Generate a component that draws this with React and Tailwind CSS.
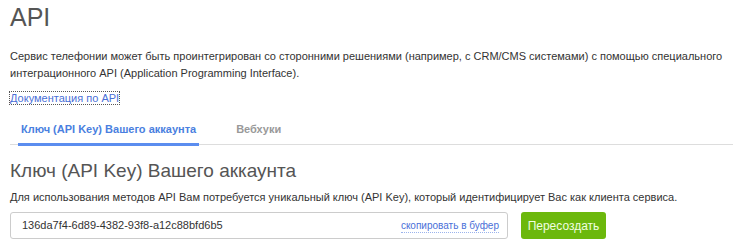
import React from 'react';

export default function App() {
  return (
    <div className="w-[743px] h-[243px] bg-white overflow-hidden px-[10px] font-['Liberation_Sans',Arial,sans-serif] text-[#333]">
      <h1 className="text-[25px] leading-[30px] pt-[2px] text-[#555]">API</h1>
      <p className="text-[11px] leading-[17px] mt-[16px]">
        Сервис телефонии может быть проинтегрирован со сторонними решениями (например, с CRM/CMS системами) с помощью специального интеграционного API (Application Programming Interface).
      </p>
      <div className="mt-[7px] leading-[16px]">
        <a className="text-[11px] leading-[16px] text-[#4a6fd8] outline outline-1 outline-dotted outline-[#555]">
          Документация по API
        </a>
      </div>
      <div className="flex border-b border-[#ddd] mt-[12px]">
        <div className="ml-[8px] px-[3px] pt-[4px] pb-[7px] border-b-[3px] border-[#5b8def] -mb-[2px] text-[11px] leading-[14px] font-bold text-[#4a7fe0]">
          Ключ (API Key) Вашего аккаунта
        </div>
        <div className="ml-[37px] pt-[4px] pb-[7px] text-[11px] leading-[14px] font-bold text-[#999]">
          Вебхуки
        </div>
      </div>
      <h2 className="text-[19px] leading-[24px] mt-[14px] text-[#555]">Ключ (API Key) Вашего аккаунта</h2>
      <p className="text-[11px] leading-[16px] mt-[6px]">
        Для использования методов API Вам потребуется уникальный ключ (API Key), который идентифицирует Вас как клиента сервиса.
      </p>
      <div className="flex items-center gap-[13px] mt-[7px]">
        <div className="w-[498px] h-[27px] border border-[#ccc] rounded-[3px] flex items-center justify-between pl-[11px] pr-[8px]">
          <span className="text-[11px]">136da7f4-6d89-4382-93f8-a12c88bfd6b5</span>
          <span className="text-[10px] text-[#4a6fd8] border-b border-dotted border-[#9bb3ec] leading-[13px]">скопировать в буфер</span>
        </div>
        <button className="w-[85px] h-[27px] rounded-[3px] bg-[#6cb80c] text-[#f0ffe0] text-[12px]">Пересоздать</button>
      </div>
    </div>
  );
}
